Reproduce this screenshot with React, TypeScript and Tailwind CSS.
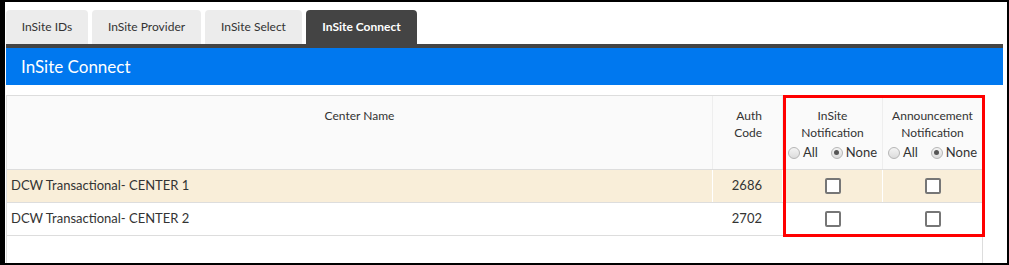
import React from 'react';

const tabs = [
  { label: 'InSite IDs', w: 'w-[82px]', active: false },
  { label: 'InSite Provider', w: 'w-[109px]', active: false },
  { label: 'InSite Select', w: 'w-[97px]', active: false },
  { label: 'InSite Connect', w: 'w-[111px]', active: true },
];

const rows = [
  { name: 'DCW Transactional- CENTER 1', code: '2686', bg: 'bg-[#f9eed9]' },
  { name: 'DCW Transactional- CENTER 2', code: '2702', bg: 'bg-white' },
];

const Radio = ({ checked }: { checked?: boolean }) => (
  <span className="inline-flex items-center justify-center w-[12px] h-[12px] rounded-full border border-[#b5b5b5] bg-gradient-to-b from-[#f4f4f4] to-[#dcdcdc] mr-[3px]">
    {checked && <span className="w-[5px] h-[5px] rounded-full bg-[#555]" />}
  </span>
);

const RadioPair = () => (
  <div className="flex items-center justify-center gap-[13px] mt-[3px] text-[13px]">
    <label className="flex items-center">
      <Radio />
      All
    </label>
    <label className="flex items-center">
      <Radio checked />
      None
    </label>
  </div>
);

const Box = () => <span className="inline-block w-[16px] h-[16px] rounded-[2px] border-2 border-[#767676] bg-white" />;

export default function App() {
  return (
    <div
      className="w-[1009px] h-[265px] overflow-hidden border-black border-t-2 border-l-[5px] border-r-2 border-b-2 bg-white text-[#333]"
      style={{ fontFamily: 'Lato, "Open Sans", sans-serif' }}
    >
      <div className="pl-[1px] pr-[4px] pt-[8px]">
        <div className="flex gap-[4px]">
          {tabs.map((t) => (
            <div
              key={t.label}
              className={`${t.w} h-[34px] flex items-center justify-center rounded-t-[4px] text-[12px] ${
                t.active ? 'bg-[#444] text-white font-bold' : 'bg-[#ececec] text-[#333]'
              }`}
            >
              {t.label}
            </div>
          ))}
        </div>
        <div className="h-[4px] bg-[#444]" />
        <div className="h-[37px] bg-[#0078ef] text-white text-[17px] flex items-center pl-[15px]">InSite Connect</div>

        <div className="relative mt-[10px] w-[977px] h-[170px] border-x border-t border-[#ddd]">
          <div className="grid grid-cols-[706px_70px_100px_99px] h-[74px] bg-[#fafafa] border-b border-[#ddd] text-[12px] leading-[17px]">
            <div className="text-center pt-[11px] border-r border-[#eee]">Center Name</div>
            <div className="text-right pr-[20px] pt-[11px] border-r border-[#eee]">
              Auth
              <br />
              Code
            </div>
            <div className="text-center pt-[11px] border-r border-[#eee]">
              InSite
              <br />
              Notification
              <RadioPair />
            </div>
            <div className="text-center pt-[11px]">
              Announcement
              <br />
              Notification
              <RadioPair />
            </div>
          </div>
          {rows.map((r) => (
            <div key={r.code} className={`grid grid-cols-[706px_70px_100px_99px] h-[33px] border-b border-[#ddd] text-[13px] ${r.bg}`}>
              <div className="flex items-center pl-[4px] border-r border-white">{r.name}</div>
              <div className="flex items-center justify-end pr-[20px] border-r border-white">{r.code}</div>
              <div className="flex items-center justify-center border-r border-white">
                <Box />
              </div>
              <div className="flex items-center justify-center">
                <Box />
              </div>
            </div>
          ))}
          <div className="absolute left-[776px] top-[-1px] w-[202px] h-[142px] border-[3px] border-[#ff0000]" />
        </div>
      </div>
    </div>
  );
}
